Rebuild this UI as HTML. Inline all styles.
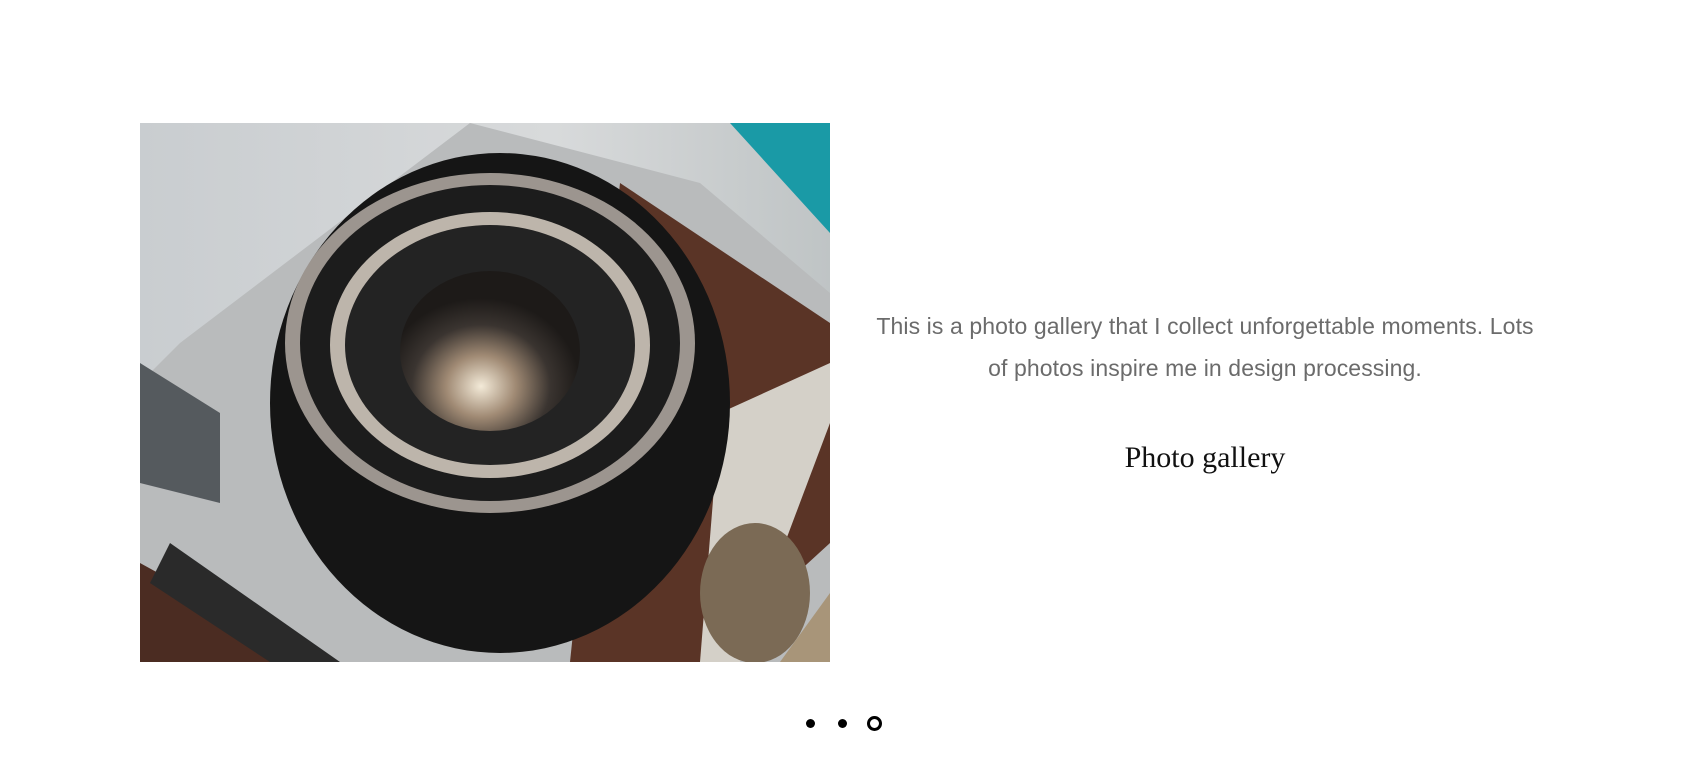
<!DOCTYPE html>
<html><head><meta charset="utf-8"><style>
html,body{margin:0;padding:0;background:#fff;width:1704px;height:769px;overflow:hidden}
.img{position:absolute;left:140px;top:123px;width:690px;height:539px;overflow:hidden}
.t{position:absolute;left:830px;width:750px;text-align:center;font-family:"Liberation Sans",sans-serif;color:#6b6b6b;font-size:23px;line-height:42px;top:305px;letter-spacing:0.1px}
.h{position:absolute;left:860px;width:690px;text-align:center;font-family:"Liberation Serif",serif;color:#111;font-size:30px;top:441px}
.d{position:absolute;top:719px;width:9px;height:9px;border-radius:50%;background:#000}
.r{position:absolute;left:867px;top:716px;width:9px;height:9px;border-radius:50%;border:3px solid #000}
</style></head><body>
<div class="img">
<svg width="690" height="539" viewBox="0 0 690 539">
<defs>
<linearGradient id="bg" x1="0" y1="0" x2="1" y2="0"><stop offset="0" stop-color="#c9cdd0"/><stop offset="0.6" stop-color="#d8dadb"/><stop offset="1" stop-color="#bfc4c5"/></linearGradient>
<radialGradient id="gl" cx="0.45" cy="0.72" r="0.55"><stop offset="0" stop-color="#f3ead8"/><stop offset="0.35" stop-color="#a08a74"/><stop offset="0.7" stop-color="#3a3430"/><stop offset="1" stop-color="#1d1a18"/></radialGradient>
</defs>
<rect width="690" height="539" fill="url(#bg)"/>
<polygon points="590,0 690,0 690,110" fill="#1a9aa6"/>
<polygon points="40,220 330,0 560,60 690,170 690,539 0,539 0,260" fill="#b9bbbc"/>
<polygon points="480,60 690,200 690,420 560,539 430,539" fill="#5a3426"/>
<polygon points="0,440 180,539 0,539" fill="#4b2c22"/>
<polygon points="30,420 200,539 130,539 10,460" fill="#2a2a2a"/>
<polygon points="0,240 80,290 80,380 0,360" fill="#555a5e"/>
<polygon points="580,290 690,240 690,300 600,539 560,539" fill="#d4d0c8"/>
<ellipse cx="615" cy="470" rx="55" ry="70" fill="#7b6a55"/>
<polygon points="640,539 690,470 690,539" fill="#a89579"/>
<ellipse cx="360" cy="280" rx="230" ry="250" fill="#151515"/>
<ellipse cx="350" cy="220" rx="205" ry="170" fill="#9c958f"/>
<ellipse cx="350" cy="220" rx="190" ry="158" fill="#1c1c1c"/>
<ellipse cx="350" cy="222" rx="160" ry="133" fill="#bdb5ab"/>
<ellipse cx="350" cy="222" rx="145" ry="120" fill="#232323"/>
<ellipse cx="350" cy="228" rx="90" ry="80" fill="url(#gl)"/>
</svg>
</div>
<div class="t">This is a photo gallery that I collect unforgettable moments. Lots<br>of photos inspire me in design processing.</div>
<div class="h">Photo gallery</div>
<div class="d" style="left:806px"></div>
<div class="d" style="left:838px"></div>
<div class="r"></div>
</body></html>
